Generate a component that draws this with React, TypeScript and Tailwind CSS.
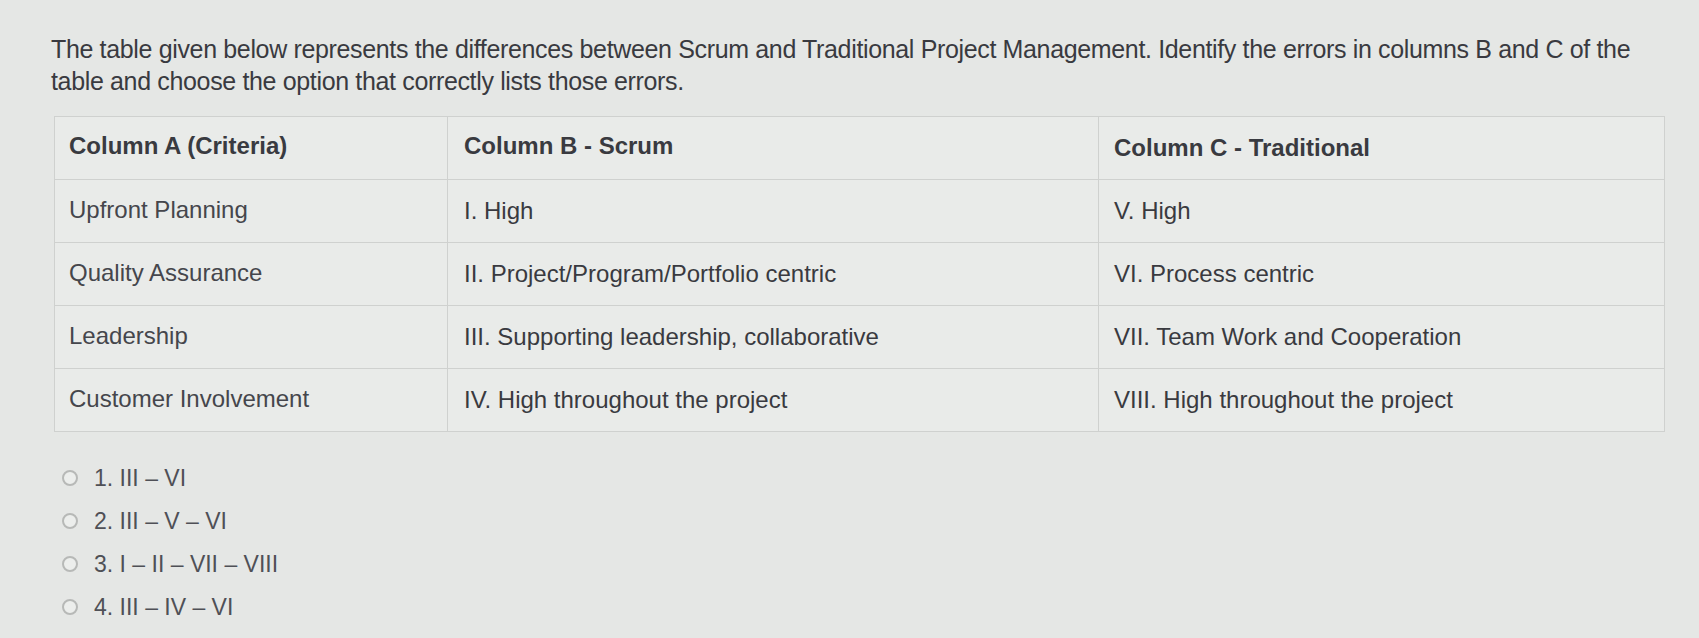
const rows = [
  ["Upfront Planning", "I. High", "V. High"],
  ["Quality Assurance", "II. Project/Program/Portfolio centric", "VI. Process centric"],
  ["Leadership", "III. Supporting leadership, collaborative", "VII. Team Work and Cooperation"],
  ["Customer Involvement", "IV. High throughout the project", "VIII. High throughout the project"],
];

const options = ["1. III – VI", "2. III – V – VI", "3. I – II – VII – VIII", "4. III – IV – VI"];

export default function App() {
  return (
    <div
      className="w-[1699px] h-[638px] overflow-hidden bg-[#e5e7e5] text-[#393a40] pl-[51px] pr-[34px] pt-[33px]"
      style={{ fontFamily: '"Liberation Sans", Arial, sans-serif' }}
    >
      <p className="text-[25px] leading-[32px] tracking-[-0.35px] w-[1600px]">
        The table given below represents the differences between Scrum and Traditional Project Management. Identify the errors in columns B and C of the table and choose the option that correctly lists those errors.
      </p>

      <table className="mt-[19px] ml-[3px] w-[1611px] border-collapse text-[24px] bg-[#e9ebe9]">
        <thead>
          <tr className="h-[63px]">
            <th className="w-[393px] border border-[#cfd1cf] pl-[14px] pb-[4px] text-left font-bold">Column A (Criteria)</th>
            <th className="w-[651px] border border-[#cfd1cf] pl-[16px] pb-[4px] text-left font-bold">Column B - Scrum</th>
            <th className="border border-[#cfd1cf] pl-[15px] text-left font-bold">Column C - Traditional</th>
          </tr>
        </thead>
        <tbody>
          {rows.map((r) => (
            <tr key={r[0]} className="h-[63px]">
              <td className="border border-[#cfd1cf] pl-[14px] pb-[2px] text-[#45464c]">{r[0]}</td>
              <td className="border border-[#cfd1cf] pl-[16px]">{r[1]}</td>
              <td className="border border-[#cfd1cf] pl-[15px]">{r[2]}</td>
            </tr>
          ))}
        </tbody>
      </table>

      <div className="mt-[34px] ml-[11px] flex flex-col gap-[19px]">
        {options.map((o) => (
          <label key={o} className="flex items-center gap-[16px] text-[23px] leading-[24px] text-[#4f5056]">
            <span className="w-[16px] h-[16px] rounded-full border-2 border-[#b7b9b7] bg-[#eceeec]" />
            {o}
          </label>
        ))}
      </div>
    </div>
  );
}
